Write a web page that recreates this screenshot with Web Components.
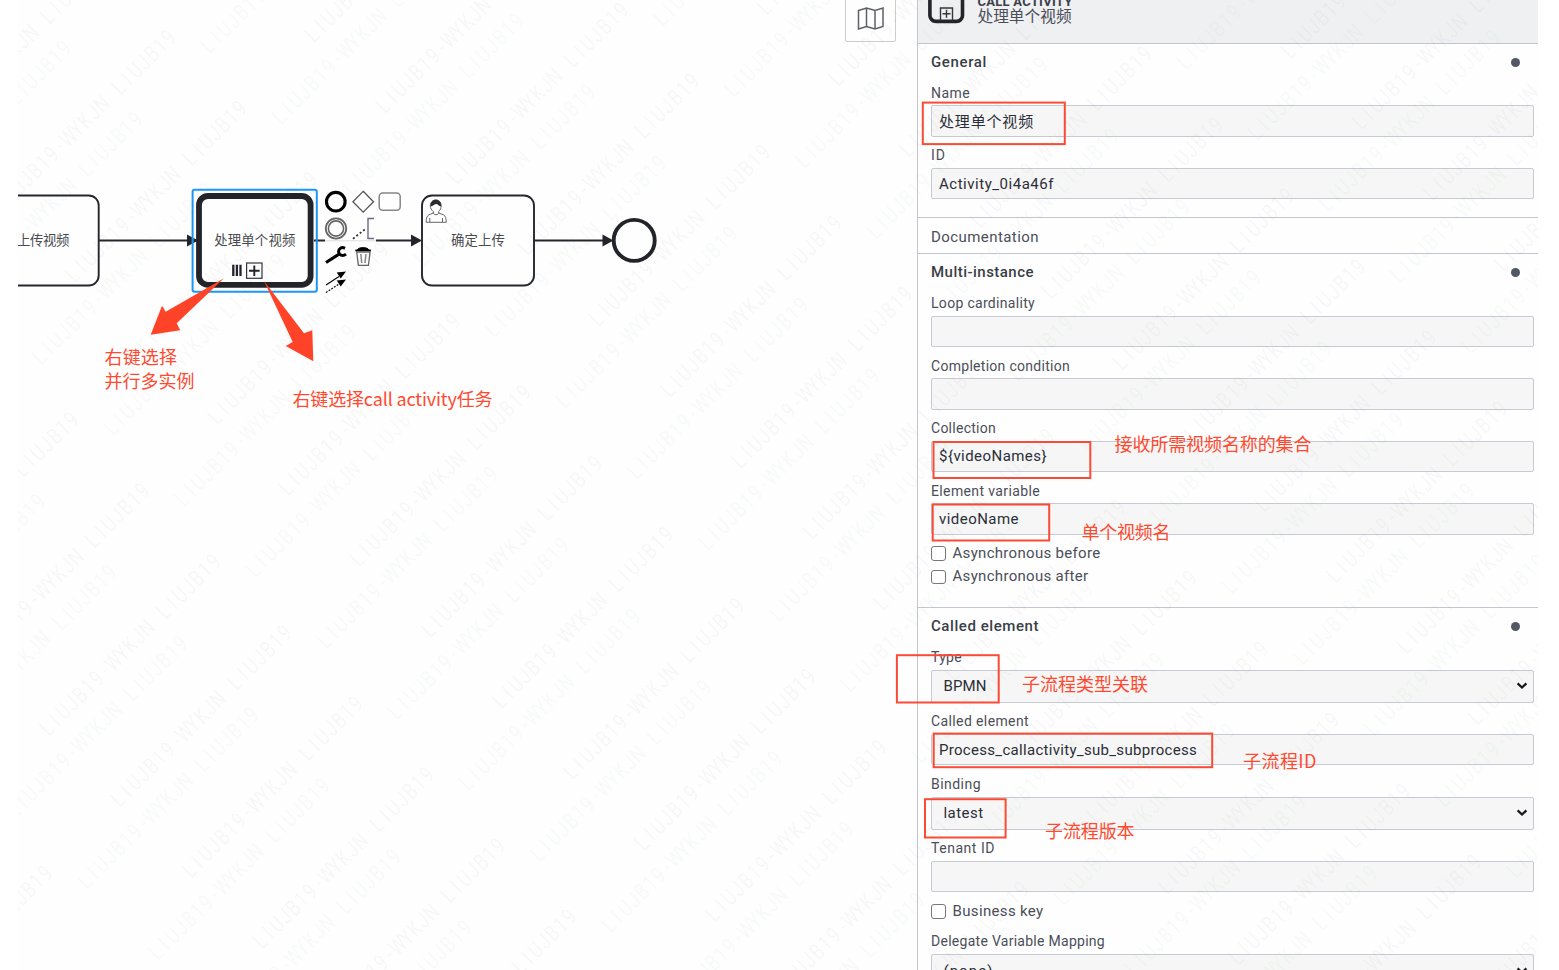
<!DOCTYPE html>
<html lang="zh">
<head>
<meta charset="utf-8">
<title>BPMN Modeler</title>
<style>
html,body{margin:0;height:100%;overflow:hidden;background:#fff}
body{font-family:"Roboto","Noto Sans CJK SC",sans-serif}
</style>
</head>
<body>
<modeler-app></modeler-app>
<script>
const define=(name,html,after)=>customElements.define(name,class extends HTMLElement{
  connectedCallback(){
    if(this.shadowRoot)return;
    const t=document.createElement('template');
    t.innerHTML=typeof html==='function'?html(this):html;
    this.attachShadow({mode:'open'}).append(t.content.cloneNode(true));
    if(after)after(this);
  }
});

/* text set to a given width by tracking */
define('fit-text','<style>:host{display:inline-block;white-space:nowrap}</style><span><slot></slot></span>',el=>{
  const w=+el.getAttribute('w');if(!w)return;
  const n=el.textContent.length,cur=el.shadowRoot.querySelector('span').getBoundingClientRect().width;
  el.style.letterSpacing=((w-cur)/n).toFixed(3)+'px';
});

define('prop-group',el=>`<style>
:host{display:block;border-bottom:1px solid #c4c6cf;padding:0 4.5px 18.2px 13px}
:host([collapsed]){padding-bottom:0}
header{display:flex;justify-content:space-between;align-items:center;height:36px;margin-bottom:-6px;font-size:15px;font-weight:500;color:#3a3e47}
:host([collapsed]) header{box-sizing:border-box;height:35px;margin:0;padding-top:1.5px;font-weight:400;color:#4b4e58}
i{width:9px;height:9px;border-radius:50%;background:#525863;margin-right:13.3px}
:host([collapsed]) i{display:none}
</style><header><fit-text w="${el.getAttribute('w')}">${el.getAttribute('label')}</fit-text><i></i></header><slot></slot>`);

define('prop-field',el=>`<style>
:host{display:block}
label{display:flex;align-items:center;box-sizing:border-box;height:31.4px;padding-top:6px;font-size:14px;color:#4b4e58}
.box{box-sizing:border-box;height:31.2px;border:1px solid #c8cad3;border-radius:2px;background:#f6f6f6;display:flex;align-items:center;justify-content:space-between;padding:0 5px 0 7px;font-size:15px;color:#2b2e36}
:host([select]) .box{height:33px;padding:0 5px 0 11.5px}
svg{display:none;width:12px;height:8px}
:host([select]) svg{display:block}
</style><label><fit-text w="${el.getAttribute('w')}">${el.getAttribute('label')}</fit-text></label>
<div class="box"><slot></slot><svg viewBox="0 0 12 8"><path d="M1.6 1.4 6 5.6l4.400-4.200" fill="none" stroke="#15171c" stroke-width="2.200"/></svg></div>`);

define('prop-check',el=>`<style>
:host{display:flex;align-items:center;height:23.6px;font-size:15px;color:#4b4e58}
b{box-sizing:border-box;width:14.5px;height:14.5px;border:1.4px solid #777;border-radius:3px;background:#fff;margin:1.4px 7px 0 0}
</style><b></b><fit-text w="${el.getAttribute('w')}"><slot></slot>${el.getAttribute('label')}</fit-text>`);

define('props-panel',`<style>
:host{display:block;box-sizing:border-box;width:621px;border-left:1.5px solid #c4c6cf;background:#fefefe;overflow:hidden}
header{position:relative;display:flex;box-sizing:border-box;height:44px;border-bottom:1px solid #c4c6cf;background:#eff0f2;padding-left:10px}
header svg{flex:none;width:38px;height:28px}
.t{display:flex;flex-direction:column;margin:-6.4px 0 0 11.5px}
.k{font-size:13px;line-height:15px;font-weight:700;color:#3c4049;height:14.4px}
.n{font-size:15.7px;line-height:18px;color:#4b4e58}
.gap{height:6.4px}
</style>
<header><svg viewBox="0 0 38 28"><rect x="1.900" y="-12" width="32.600" height="33.400" rx="6" fill="none" stroke="#22242a" stroke-width="3.600"/><path d="M12.500 20.500V8h12v12.500M18.500 9.800v8M14.500 13.800h8" fill="none" stroke="#33363d" stroke-width="1.400"/></svg>
<div class="t"><div class="k"><fit-text w="95">CALL ACTIVITY</fit-text></div><div class="n">处理单个视频</div></div></header>
<prop-group label="General" w="56">
<prop-field label="Name" w="39"><fit-text w="95">处理单个视频</fit-text></prop-field>
<prop-field label="ID" w="15"><fit-text w="115">Activity_0i4a46f</fit-text></prop-field>
</prop-group>
<prop-group label="Documentation" w="108" collapsed></prop-group>
<prop-group label="Multi-instance" w="103">
<prop-field label="Loop cardinality" w="104"></prop-field>
<prop-field label="Completion condition" w="139"></prop-field>
<prop-field label="Collection" w="65"><fit-text w="108">\${videoNames}</fit-text></prop-field>
<prop-field label="Element variable" w="109"><fit-text w="80">videoName</fit-text></prop-field>
<div class="gap"></div>
<prop-check label="Asynchronous before" w="148"></prop-check>
<prop-check label="Asynchronous after" w="136"></prop-check>
<div style="height:.8px"></div>
</prop-group>
<prop-group label="Called element" w="108">
<prop-field label="Type" w="31" select><fit-text w="43">BPMN</fit-text></prop-field>
<prop-field label="Called element" w="98"><fit-text w="258">Process_callactivity_sub_subprocess</fit-text></prop-field>
<prop-field label="Binding" w="50" select><fit-text w="40">latest</fit-text></prop-field>
<prop-field label="Tenant ID" w="64"></prop-field>
<div class="gap" style="height:7px"></div>
<prop-check label="Business key" w="91"></prop-check>
<prop-field label="Delegate Variable Mapping" w="174" select><fit-text w="50">(none)</fit-text></prop-field>
</prop-group>`);

define('bpmn-canvas',`<style>
:host{display:block;position:relative;flex:1;background:#fefefe;overflow:hidden}
svg{display:block}
button{position:absolute;left:827px;top:-8px;width:50.5px;height:50px;box-sizing:border-box;border:1.3px solid #ccc;border-radius:2px;background:#fefefe;padding:0}
button svg{position:absolute;left:11px;top:13px}
text{font-family:"Noto Sans CJK SC",sans-serif;font-size:13.4px;fill:#4a4b50}
</style>
<svg width="899" height="970" viewBox="18 0 899 970">
<g fill="none" stroke="#26272d" stroke-width="1.9">
<path d="M99 240.5h98M314 240.5h98M534 240.5h70"/>
<rect x="-14" y="195.5" width="112.7" height="90" rx="10" fill="#fefefe"/>
<rect x="422" y="195.5" width="112" height="90" rx="10" fill="#fefefe"/>
</g>
<rect x="199" y="196" width="111.6" height="88.9" rx="9" fill="#fefefe" stroke="#22242a" stroke-width="5.8"/>
<g fill="#22242a"><path d="M187 234.5l11 6-11 6zM411 234.5l11 6-11 6zM602.500 234.500l11 6-11 6z"/></g>
<circle cx="634.2" cy="240.4" r="20.500" fill="#fefefe" stroke="#22242a" stroke-width="3.900"/>
<rect x="192.600" y="189.700" width="124.200" height="102" rx="2" fill="none" stroke="#1c96fa" stroke-width="2"/>
<text x="17" y="245.200" textLength="52.500">上传视频</text>
<text x="214.300" y="245.200" textLength="81">处理单个视频</text>
<text x="451" y="245.200" textLength="54">确定上传</text>
<path d="M233.300 264.700v11.300M236.900 264.700v11.300M240.500 264.700v11.300" stroke="#22242a" stroke-width="2.300"/>
<rect x="246.600" y="263" width="15.400" height="15.300" fill="none" stroke="#33353b" stroke-width="1.200"/>
<path d="M254.300 265.500v10.500M249 270.700h10.600" stroke="#22242a" stroke-width="1.900"/>
<g fill="none" stroke="#666" stroke-width="1">
<path d="M430.500 207.500c-1-5 2-7.500 5.500-7.500s6 3 5 7.500c-.5 2-1.500 3.500-2.500 4.200l.2 1.300 4.800 1.800c2 1 2.700 3.500 2.700 7.500h-20c0-4 .7-6.500 2.700-7.500l4.500-1.800.2-1.300c-1.200-.8-2.500-2-3.100-4.200z" fill="#fefefe"/>
<path d="M433 212.500c.5 3 5.500 3 6 0M429.800 222v-4M442.500 222v-4"/>
<path d="M430.500 206.500c0-5 2.500-6.700 5.500-6.700s5.500 2.500 5 6.700c-2-.2-3-2.500-5-2.500s-3 2.500-5.500 2.500z" fill="#2b2c31" stroke="none"/>
</g>
<rect x="325" y="238" width="51" height="5" fill="#fefefe"/><path d="M325 240.800h51" stroke="#ddd"/>
<g fill="none" stroke="#000">
<circle cx="335.800" cy="201.700" r="9.300" stroke-width="3.100"/>
<path d="M363.200 191.300 373.500 201.700 363.200 212.100 352.900 201.700z" stroke="#555" stroke-width="1.300"/>
<rect x="379.200" y="193" width="21" height="17.200" rx="3.500" stroke="#878787" stroke-width="1.500"/>
<circle cx="336" cy="228.500" r="10.200" fill="#fefefe" stroke="#666" stroke-width="1.800"/>
<circle cx="336" cy="228.500" r="7.600" stroke="#666" stroke-width="1.600"/>
<path d="M374 218.500h-6v20h6" stroke="#6f6784" stroke-width="1.400"/>
<path d="M353 238.700 366 228.500" stroke="#333" stroke-width="1.800" stroke-dasharray="2 2.300"/>
<path d="M326 262.500 338.500 254.500" stroke-width="3.200"/>
<path d="M345 248.300c-3.500-1.800-6.600.3-6.400 3.500s4 4.900 7.400 2.300" stroke-width="3"/>
<path d="M355.300 250.500h15.600" stroke-width="1.800"/><path d="M357.500 249.500c1-2.500 10-2.500 11.200 0z" fill="#000" stroke-width="1"/>
<path d="M356.700 252l1.700 13.300h10l1.700-13.300z" stroke="#666" stroke-width="1.300"/>
<path d="M360.800 254l1 9M366 254l-1 9" stroke="#888" stroke-width="1.500"/>
<path d="M326 285l13-8.500" stroke-width="1.100"/><path d="M326 292.500l13-8.500" stroke-width="1.200" stroke-dasharray="1.800 1.400"/>
<path d="M346 271.500l-5.300 7-4-5.900zM346 279.500l-5.300 7-4-5.900z" fill="#000" stroke="none"/>
</g>
</svg>
<button aria-label="minimap"><svg width="28" height="24" viewBox="0 0 28 24"><path d="M1.500 4.500 9.500 2l8.500 2.500 8-2.500v18.500l-8 2.500-8.500-2.500-8 2.500zM9.500 2v18.500M18 4.500V23" fill="none" stroke="#5e6068" stroke-width="1.500"/></svg></button>`);

define('note-layer',`<style>
:host{position:absolute;inset:0;pointer-events:none}
svg{display:block}
text{font-family:"Noto Sans CJK SC",sans-serif;font-size:18px;fill:#ff4a30}
</style>
<svg width="1559" height="970">
<g fill="#ff4328">
<path d="M224 278.300 165.700 311.700 162 305.700 150.700 334.700 180.300 330.300 176.700 323.300z"/>
<path d="M264 281 304 333.300 312.300 330.300 313.300 361.300 285.700 346 292.700 342z"/>
</g>
<g fill="none" stroke="#fa4b37" stroke-width="2">
<rect x="922.800" y="102.600" width="142" height="41.500"/>
<rect x="933.500" y="442" width="156.800" height="36"/>
<rect x="932.700" y="504.500" width="116.500" height="36"/>
<rect x="896.900" y="655.200" width="101.800" height="47.300"/>
<rect x="933.700" y="733.600" width="278.500" height="33.600"/>
<rect x="925" y="799.200" width="80.600" height="38.300"/>
</g>
<text x="104.500" y="363.600" textLength="72.500">右键选择</text>
<text x="104.500" y="387.600" textLength="90">并行多实例</text>
<text x="292.500" y="405.600" textLength="200">右键选择call activity任务</text>
<text x="1114.500" y="450.800" textLength="197">接收所需视频名称的集合</text>
<text x="1081.500" y="539" textLength="89">单个视频名</text>
<text x="1022" y="691" textLength="126">子流程类型关联</text>
<text x="1243" y="768.300" textLength="73.500">子流程ID</text>
<text x="1045" y="838" textLength="89.500">子流程版本</text>
</svg>`);

define('water-mark',()=>{
  const s='LIUJB19-WYKJN LIUJB19',xs=[...s].map((c,i)=>((i+.5)*11.8/.74).toFixed(1)).join(' ');
  let out='';
  for(const [ox,oy,fill] of [[48,738,'rgba(60,60,60,.05)'],[86,891,'rgba(50,150,70,.055)']])
    for(let n=-5;n<9;n++)for(let k=-14;k<20;k++){
      const x=ox+71.1*k+239.3*n,y=oy+71*k-240.3*n;
      if(x<-150||x>1530||y<5||y>1120)continue;
      out+=`<text transform="translate(${x.toFixed(1)} ${y.toFixed(1)}) rotate(-45) scale(.74 1)" x="${xs}" fill="${fill}">${s}</text>`;
    }
  return `<style>:host{position:absolute;top:0;left:18px;width:1520px;height:970px;overflow:hidden;pointer-events:none}
svg{display:block}text{font-family:"Roboto",sans-serif;font-size:23px;font-weight:400;text-anchor:middle}</style>
<svg width="1520" height="970" viewBox="18 0 1520 970" aria-hidden="true">${out}</svg>`;
});

define('modeler-app',`<style>
:host{display:flex;position:relative;box-sizing:border-box;width:1559px;height:970px;padding:0 21px 0 18px;background:#fff;overflow:hidden}
</style><bpmn-canvas></bpmn-canvas><props-panel></props-panel><water-mark></water-mark><note-layer></note-layer>`);
</script>
</body>
</html>
